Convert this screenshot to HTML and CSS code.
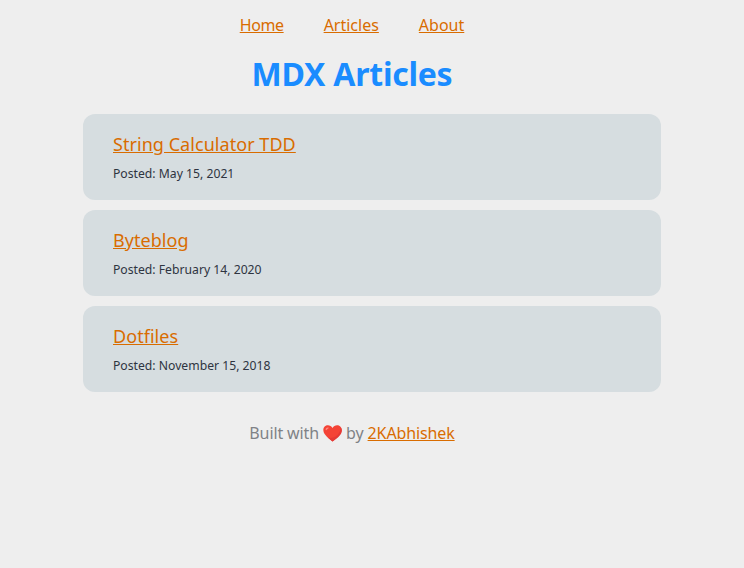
FILE: index.html
```html
<!DOCTYPE html>
<html>

<head>
    <title>MDX Articles</title>
    <meta name="viewport" content="width=device-width, initial-scale=1.0">
    <link rel="stylesheet" href="styles.css">
</head>

<body>
    <div class="page">
        <nav class="nav">
            <a href="#">Home</a>
            <a href="#">Articles</a>
            <a href="#">About</a>
        </nav>

        <h1 class="topic">MDX Articles</h1>

        <div class="list">
            <div class="card">
                <h2><a href="#">String Calculator TDD</a></h2>
                <p>Posted: May 15, 2021</p>
            </div>
            <div class="card">
                <h2><a href="#">Byteblog</a></h2>
                <p>Posted: February 14, 2020</p>
            </div>
            <div class="card">
                <h2><a href="#">Dotfiles</a></h2>
                <p>Posted: November 15, 2018</p>
            </div>
        </div>

        <footer class="footer">
            Built with
            <svg class="heart" viewBox="0 0 20 18" width="19" height="17">
                <path d="M10 17.6C3.6 12.4 .3 9.2 .3 5.3 .3 2.4 2.5 .3 5.2 .3c1.9 0 3.7 1 4.8 2.9C11.1 1.3 12.9 .3 14.8 .3c2.7 0 4.9 2.1 4.9 5 0 3.9-3.3 7.1-9.7 12.3z" fill="#f44336"/>
                <path d="M10 17.6c-2-1.6-3.7-3.1-5.1-4.5 4.6 1.6 9.6-.4 12.4-5.4 1-1.8 1.5-3.9 1.1-5.6 .9 .9 1.5 2.2 1.5 3.7 0 3.9-3.3 7.1-9.9 11.8z" fill="#e53935"/>
                <path d="M3 3.6C3.8 2.7 5.2 2.3 6 2.9 6.3 3.3 5.6 3.7 5 4.1 4.4 4.6 4 5.4 3.4 5.5 2.7 5.5 2.5 4.4 3 3.6z" fill="#ff8a80"/>
            </svg>
            by <a href="#">2KAbhishek</a>
        </footer>
    </div>
</body>

</html>
```

FILE: styles.css
```css
* {
    margin: 0;
    padding: 0;
    box-sizing: border-box;
}

body {
    background-color: #eeeeee;
    font-family: "Noto Sans", sans-serif;
    color: #2e3440;
}

a {
    color: #d96c00;
}

.page {
    width: 704px;
}

.nav {
    display: flex;
    justify-content: center;
    gap: 40px;
    padding-top: 14px;
    font-size: 16px;
    line-height: 22px;
}

.nav a:first-child {
    letter-spacing: -0.4px;
}

.topic {
    text-align: center;
    color: #1a8cff;
    font-size: 32px;
    font-weight: 700;
    line-height: 44px;
    letter-spacing: -0.25px;
    margin-top: 16px;
    margin-bottom: 18px;
}

.list {
    display: flex;
    flex-direction: column;
    gap: 10px;
    width: 578px;
    margin-left: 83px;
}

.card {
    background-color: #d6dde0;
    border-radius: 12px;
    height: 86px;
    padding: 18px 30px;
}

.card h2 {
    font-size: 18px;
    font-weight: normal;
    line-height: 24px;
    letter-spacing: 0.05px;
}

.card p {
    font-size: 12.2px;
    line-height: 16px;
    margin-top: 10px;
}

.footer {
    text-align: center;
    color: #7f8286;
    font-size: 16px;
    line-height: 22px;
    letter-spacing: -0.12px;
    margin-top: 30px;
}

.heart {
    vertical-align: -3px;
}
```
